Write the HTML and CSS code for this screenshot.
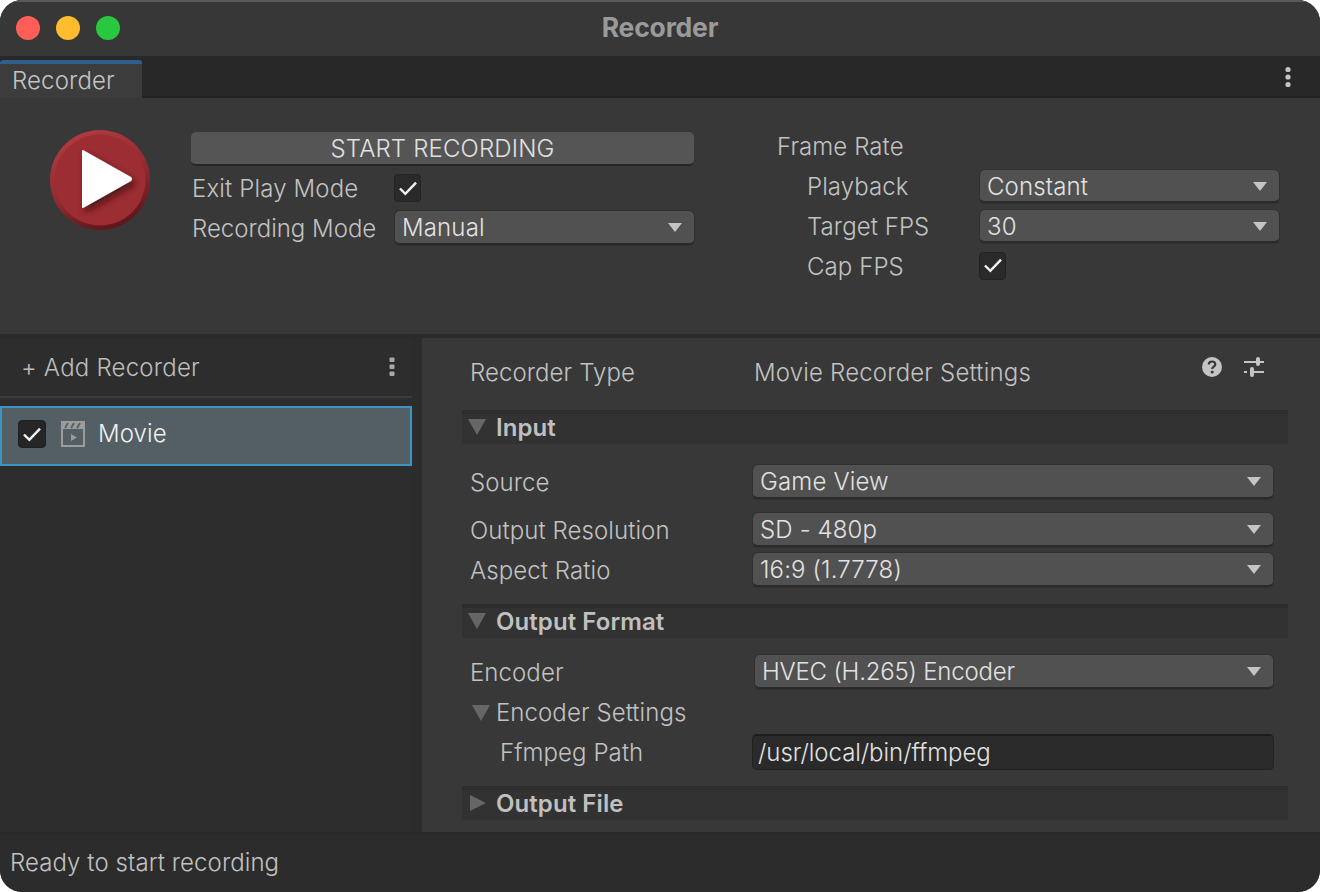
FILE: index.html
```html
<!DOCTYPE html>
<html lang="en">
<head>
    <meta charset="UTF-8">
    <meta name="viewport" content="width=device-width, initial-scale=1.0">
    <title>Recorder</title>
    <link rel="stylesheet" href="styles.css">
</head>
<body>
    <div class="window">
        <div class="titlebar">
            <div class="lights">
                <span class="light red"></span>
                <span class="light yellow"></span>
                <span class="light green"></span>
            </div>
            <div class="title">Recorder</div>
        </div>

        <div class="tabbar">
            <div class="tab">Recorder</div>
            <svg class="tab-menu" width="8" height="22" viewBox="0 0 8 22">
                <circle cx="4" cy="3.5" r="2.6"/>
                <circle cx="4" cy="11" r="2.6"/>
                <circle cx="4" cy="18.5" r="2.6"/>
            </svg>
        </div>

        <div class="top-panel">
            <svg class="play-icon" width="104" height="104" viewBox="0 0 104 104">
                <defs>
                    <filter id="tri-shadow" x="-30%" y="-30%" width="170%" height="170%">
                        <feDropShadow dx="3" dy="4" stdDeviation="3.5" flood-color="#3a0b0f" flood-opacity="0.8"/>
                    </filter>
                    <linearGradient id="rim" x1="0.3" y1="0" x2="0.7" y2="1">
                        <stop offset="0" stop-color="#b23a42"/>
                        <stop offset="0.55" stop-color="#8f2a30"/>
                        <stop offset="1" stop-color="#5a1418"/>
                    </linearGradient>
                </defs>
                <circle cx="52" cy="52" r="50" fill="url(#rim)"/>
                <circle cx="52" cy="52" r="45.5" fill="#9c2d33"/>
                <path d="M35 23 L82 49.500 Q84 51 82 52.500 L35 79 Z" fill="#fff" stroke="#fff" stroke-width="2" stroke-linejoin="round" filter="url(#tri-shadow)"/>
            </svg>

            <div class="start-col">
                <button class="start-btn">START RECORDING</button>
                <div class="row exit-row">
                    <span class="top-label">Exit Play Mode</span>
                    <span class="check">
                        <svg width="18" height="15" viewBox="0 0 16 14"><path d="M0.500 7 L5.500 12 L15.500 1.500"/></svg>
                    </span>
                </div>
                <div class="row mode-row">
                    <span class="top-label mode-label">Recording Mode</span>
                    <div class="select mode-select">Manual</div>
                </div>
            </div>

            <div class="frame-col">
                <div class="frame-title">Frame Rate</div>
                <div class="row frame-row">
                    <span class="frame-label">Playback</span>
                    <div class="select frame-select">Constant</div>
                </div>
                <div class="row frame-row">
                    <span class="frame-label">Target FPS</span>
                    <div class="select frame-select">30</div>
                </div>
                <div class="row frame-row">
                    <span class="frame-label">Cap FPS</span>
                    <span class="check cap-check">
                        <svg width="18" height="15" viewBox="0 0 16 14"><path d="M0.500 7 L5.500 12 L15.500 1.500"/></svg>
                    </span>
                </div>
            </div>
        </div>

        <div class="main">
            <div class="sidebar">
                <div class="add-bar">
                    <span>+ Add Recorder</span>
                    <svg class="side-menu" width="6" height="20" viewBox="0 0 6 20">
                        <rect x="0.500" y="0.500" width="5" height="4.500" rx="1"/>
                        <rect x="0.500" y="7.500" width="5" height="4.500" rx="1"/>
                        <rect x="0.500" y="14.500" width="5" height="4.500" rx="1"/>
                    </svg>
                </div>
                <div class="recorder-item">
                    <span class="check check-dark">
                        <svg width="18" height="15" viewBox="0 0 16 14"><path d="M0.500 7 L5.500 12 L15.500 1.500"/></svg>
                    </span>
                    <svg class="clapper" width="24" height="26" viewBox="0 0 24 26">
                        <rect x="1" y="1" width="22" height="24" fill="none" stroke="#9c9c9c" stroke-width="2"/>
                        <rect x="1" y="1" width="22" height="7" fill="#9c9c9c"/>
                        <path d="M4 7 L7 2 M10 7 L13 2 M16 7 L19 2" stroke="#55636a" stroke-width="2"/>
                        <path d="M10 13 L16 16.500 L10 20 Z" fill="#9c9c9c"/>
                    </svg>
                    <span class="item-name">Movie</span>
                </div>
            </div>

            <div class="settings">
                <div class="type-row">
                    <span class="field-label">Recorder Type</span>
                    <span class="type-value">Movie Recorder Settings</span>
                    <svg class="help" width="20" height="20" viewBox="0 0 20 20">
                        <circle cx="10" cy="10" r="10" fill="#c4c4c4"/>
                        <path d="M6.800 7.600 C6.800 5.600 8.300 4.500 10.100 4.500 C12 4.500 13.300 5.700 13.300 7.300 C13.300 9.600 10.200 9.600 10.200 12" fill="none" stroke="#383838" stroke-width="2.200"/>
                        <circle cx="10.200" cy="15" r="1.500" fill="#383838"/>
                    </svg>
                    <svg class="sliders" width="20" height="20" viewBox="0 0 20 20">
                        <path d="M0 5 H20 M0 15 H3 M7 15 H20" stroke="#c4c4c4" stroke-width="2" fill="none"/>
                        <rect x="12" y="0" width="4" height="9" rx="2" fill="#c4c4c4"/>
                        <rect x="6" y="10" width="4" height="10" rx="2" fill="#c4c4c4"/>
                    </svg>
                </div>

                <div class="section section-input">
                    <span class="tri tri-down"></span>Input
                </div>
                <div class="field field-source">
                    <span class="field-label">Source</span>
                    <div class="select wide-select">Game View</div>
                </div>
                <div class="field field-res">
                    <span class="field-label">Output Resolution</span>
                    <div class="select wide-select">SD - 480p</div>
                </div>
                <div class="field field-aspect">
                    <span class="field-label">Aspect Ratio</span>
                    <div class="select wide-select">16:9 (1.7778)</div>
                </div>

                <div class="section section-format">
                    <span class="tri tri-down"></span>Output Format
                </div>
                <div class="field field-encoder">
                    <span class="field-label">Encoder</span>
                    <div class="select encoder-select">HVEC (H.265) Encoder</div>
                </div>
                <div class="foldout">
                    <span class="tri tri-down tri-small"></span>Encoder Settings
                </div>
                <div class="field field-path">
                    <span class="field-label path-label">Ffmpeg Path</span>
                    <div class="text-input">/usr/local/bin/ffmpeg</div>
                </div>

                <div class="section section-file">
                    <span class="tri tri-right"></span>Output File
                </div>
            </div>
        </div>

        <div class="statusbar">Ready to start recording</div>
    </div>
</body>
</html>
```

FILE: styles.css
```css
html, body {
    margin: 0;
    padding: 0;
    background-color: #fff;
}
body {
    font-family: Inter, "Liberation Sans", sans-serif;
    font-size: 24px;
    font-weight: 300;
    letter-spacing: 0.08px;
    color: #c2c2c2;
    width: 1320px;
    height: 892px;
    overflow: hidden;
}
.window {
    width: 1320px;
    height: 892px;
    border-radius: 22px;
    overflow: hidden;
    display: flex;
    flex-direction: column;
    background-color: #2c2c2c;
}
.row {
    display: flex;
    align-items: center;
}

/* title bar */
.titlebar {
    height: 56px;
    box-sizing: border-box;
    border-top: 2px solid #5a5a5a;
    background-color: #373737;
    display: flex;
    align-items: center;
    justify-content: center;
    position: relative;
    flex-shrink: 0;
}
.lights {
    position: absolute;
    left: 16px;
    top: 14px;
    display: flex;
    gap: 16px;
}
.light {
    width: 24px;
    height: 24px;
    border-radius: 50%;
}
.red { background-color: #ff5f57; }
.yellow { background-color: #febc2e; }
.green { background-color: #28c840; }
.title {
    font-weight: 700;
    font-size: 26.500px;
    color: #9a9a9a;
    letter-spacing: -0.2px;
    padding-bottom: 4px;
}

/* tabs */
.tabbar {
    height: 42px;
    box-sizing: border-box;
    background-color: #282828;
    border-bottom: 2px solid #222;
    display: flex;
    justify-content: space-between;
    align-items: flex-start;
    padding-right: 28px;
    flex-shrink: 0;
}
.tab {
    width: 142px;
    height: 40px;
    box-sizing: border-box;
    border-top: 4px solid #2f5f8f;
    margin-top: 4px;
    background-color: #3c3c3c;
    padding-left: 12px;
    line-height: 34px;
    color: #c4c4c4;
    margin-bottom: -4px;
    border-radius: 3px 3px 0 0;
    letter-spacing: 0.15px;
}
.tab-menu {
    margin-top: 10px;
    fill: #c4c4c4;
}

/* top panel */
.top-panel {
    height: 236px;
    box-sizing: border-box;
    background-color: #383838;
    display: flex;
    align-items: flex-start;
    flex-shrink: 0;
}
.play-icon {
    margin: 30px 0 0 48px;
    flex-shrink: 0;
}
.start-col {
    width: 502px;
    margin: 34px 0 0 40px;
}
.start-btn {
    display: block;
    width: 503px;
    height: 34px;
    margin-left: -1px;
    border: none;
    border-bottom: 2px solid #262626;
    border-radius: 5px;
    background-color: #555;
    color: #e0e0e0;
    font-family: inherit;
    font-size: 24px;
    font-weight: 300;
    letter-spacing: 0.15px;
    padding: 0;
}
.top-label {
    width: 203px;
    flex-shrink: 0;
    letter-spacing: 0.15px;
}
.mode-label {
    letter-spacing: 0;
}
.exit-row {
    height: 28px;
    margin-top: 8px;
}
.mode-row {
    margin-top: 9px;
}
.check {
    width: 27px;
    height: 28px;
    box-sizing: border-box;
    display: flex;
    align-items: center;
    justify-content: center;
    background-color: #2a2a2a;
    border: 1px solid #232323;
    border-radius: 4px;
    flex-shrink: 0;
    margin-left: -1px;
}
.check svg path {
    fill: none;
    stroke: #f0f0f0;
    stroke-width: 2.300;
}
.cap-check {
    margin-bottom: 2px;
}
.check-dark {
    width: 28px;
    margin-left: 0;
    background-color: #262626;
    border-color: #1f1f1f;
}
.select {
    height: 34px;
    box-sizing: border-box;
    background-color: #515151;
    border-bottom: 2px solid #2a2a2a;
    border-radius: 5px;
    box-shadow: 0 0 0 1px #303030;
    color: #e2e2e2;
    padding-left: 7px;
    line-height: 33px;
    position: relative;
    letter-spacing: 0.15px;
}
.select::after {
    content: "";
    position: absolute;
    right: 12px;
    top: 12px;
    border-left: 7.500px solid transparent;
    border-right: 7.500px solid transparent;
    border-top: 9px solid #c4c4c4;
}
.mode-select {
    width: 299px;
}
.frame-col {
    margin: 33px 0 0 83px;
}
.frame-title {
    height: 32px;
    line-height: 32px;
}
.frame-row {
    margin-top: 7px;
    height: 33px;
}
.frame-label {
    width: 173px;
    padding-left: 30px;
    flex-shrink: 0;
}
.frame-select {
    width: 299px;
    height: 33px;
}

/* main area */
.main {
    height: 498px;
    box-sizing: border-box;
    border-top: 4px solid #2b2b2b;
    display: flex;
    flex-shrink: 0;
}
.sidebar {
    width: 412px;
    flex-shrink: 0;
    background-color: #2d2d2d;
    margin-right: 10px;
}
.add-bar {
    height: 60px;
    box-sizing: border-box;
    display: flex;
    justify-content: space-between;
    align-items: center;
    padding: 0 17px 0 21px;
    border-bottom: 2px solid #3c3c3c;
    color: #bdbdbd;
    letter-spacing: 0.22px;
}
.side-menu {
    fill: #a8a8a8;
}
.recorder-item {
    margin-top: 8px;
    height: 60px;
    box-sizing: border-box;
    border: 2px solid #3a94c4;
    background-color: #535f65;
    display: flex;
    align-items: center;
    padding: 0 0 4px 16px;
    color: #f0f0f0;
}
.clapper {
    margin-left: 15px;
}
.item-name {
    margin: -2px 0 0 13px;
}
.settings {
    flex: 1;
    background-color: #383838;
    padding: 0 32px 0 40px;
}
.type-row {
    height: 68px;
    padding-bottom: 4px;
    display: flex;
    align-items: center;
    padding-left: 8px;
}
.field-label {
    width: 284px;
    flex-shrink: 0;
}
.type-value {
    flex: 1;
    letter-spacing: 0.18px;
}
.help {
    position: relative;
    top: -5px;
}
.sliders {
    margin: 0 24px 0 22px;
    position: relative;
    top: -5px;
}
.section {
    height: 34px;
    box-sizing: border-box;
    border-top: 4px solid #2d2d2d;
    background-color: #323232;
    font-weight: 600;
    display: flex;
    align-items: center;
    color: #c0c0c0;
    padding: 0 0 3px 6px;
}
.tri {
    display: inline-block;
    width: 0;
    height: 0;
    flex-shrink: 0;
    margin-right: 10px;
}
.tri-down {
    border-left: 9px solid transparent;
    border-right: 9px solid transparent;
    border-top: 16px solid #666;
    margin-top: -1px;
}
.tri-right {
    border-top: 8px solid transparent;
    border-bottom: 8px solid transparent;
    border-left: 16px solid #666;
    margin-left: 2px;
    margin-right: 10px;
    margin-top: -1px;
}
.section-format { margin-top: 17px; }
.section-file { margin-top: 16px; }
.field {
    display: flex;
    align-items: center;
    padding-left: 8px;
}
.field-source { margin-top: 21px; }
.field-res { margin-top: 14px; }
.field-aspect { margin-top: 6px; }
.field-encoder { margin-top: 17px; }
.wide-select {
    width: 520px;
    margin-left: -1px;
}
.encoder-select {
    width: 518px;
    margin-left: 1px;
    letter-spacing: -0.2px;
}
.foldout {
    display: flex;
    align-items: center;
    height: 34px;
    margin-top: 6px;
    padding-left: 10px;
}
.tri-small {
    margin-right: 6px;
    margin-top: 2px;
}
.field-path {
    margin-top: 5px;
}
.path-label {
    padding-left: 30px;
    width: 252px;
}
.text-input {
    width: 522px;
    height: 36px;
    box-sizing: border-box;
    background-color: #2a2a2a;
    border: 1px solid #212121;
    border-top: 2px solid #1c1c1c;
    border-radius: 5px;
    padding-left: 5px;
    line-height: 33px;
    color: #e2e2e2;
    letter-spacing: -0.05px;
}
.statusbar {
    flex: 1;
    background-color: #2c2c2c;
    border-top: 2px solid #292929;
    padding-left: 10px;
    line-height: 57px;
    color: #c2c2c2;
}
```
